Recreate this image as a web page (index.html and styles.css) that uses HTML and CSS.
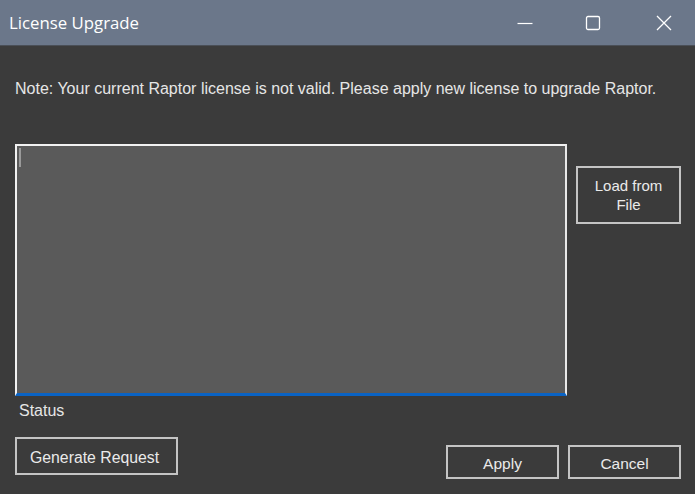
FILE: index.html
```html
<!DOCTYPE html>
<html>
<head>
<meta charset="utf-8">
<link rel="stylesheet" href="styles.css">
</head>
<body>
<div class="window">
  <header class="titlebar">
    <span class="title">License Upgrade</span>
    <div class="controls">
      <svg class="ctl ctl-min" width="16" height="16" viewBox="0 0 16 16"><path d="M0.5 8.5H15.5" stroke="#fff" stroke-width="1.2" fill="none"/></svg>
      <svg class="ctl ctl-max" width="16" height="16" viewBox="0 0 16 16"><rect x="1.5" y="1.5" width="13" height="13" rx="1.5" stroke="#fff" stroke-width="1.3" fill="none"/></svg>
      <svg class="ctl ctl-close" width="16" height="16" viewBox="0 0 16 16"><path d="M1 1L15 15M15 1L1 15" stroke="#fff" stroke-width="1.3" fill="none"/></svg>
    </div>
  </header>
  <main class="content">
    <p class="note">Note: Your current Raptor license is not valid. Please apply new license to upgrade Raptor.</p>
    <div class="editor-row">
      <div class="textbox"><span class="caret"></span></div>
      <div class="side">
        <button class="btn btn-load">Load from<br>File</button>
      </div>
    </div>
    <div class="status">Status</div>
    <div class="actions">
      <button class="btn btn-generate">Generate Request</button>
      <div class="right-actions">
        <button class="btn btn-dialog">Apply</button>
        <button class="btn btn-dialog">Cancel</button>
      </div>
    </div>
  </main>
</div>
</body>
</html>
```

FILE: styles.css
```css
html, body {
  margin: 0;
  padding: 0;
  background: #3b3b3b;
}
.window {
  width: 695px;
  height: 494px;
  overflow: hidden;
  background: #3b3b3b;
  font-family: "Liberation Sans", Arial, sans-serif;
  color: #e6e6e6;
}
.titlebar {
  height: 46px;
  background: #6b778a;
  border-bottom: 1px solid #4a4f57;
  box-sizing: border-box;
  display: flex;
  align-items: center;
}
.title {
  font-family: "Open Sans", "Noto Sans", sans-serif;
  font-size: 16.8px;
  color: #ffffff;
  padding-left: 9px;
  padding-bottom: 1px;
}
.controls {
  margin-left: auto;
  display: flex;
  align-items: center;
  padding-right: 23px;
}
.ctl { display: block; }
.ctl-max { margin-left: 52px; }
.ctl-close { margin-left: 55px; }

.content {
  padding: 0 14px 0 15px;
}
.note {
  margin: 0;
  padding-top: 34px;
  font-size: 16px;
  line-height: 18px;
  height: 18px;
  white-space: nowrap;
}
.editor-row {
  display: flex;
  margin-top: 46px;
}
.textbox {
  width: 552px;
  height: 252px;
  box-sizing: border-box;
  background: #5a5a5a;
  border-top: 2px solid #f2f2f2;
  border-left: 2px solid #f2f2f2;
  border-right: 2px solid #e8e8e8;
  border-bottom: 3px solid #0a63c4;
  padding: 2px 0 0 2px;
}
.caret {
  display: block;
  width: 2px;
  height: 19px;
  background: #9a9a9a;
}
.side {
  padding-left: 9px;
  padding-top: 22px;
}
.btn {
  font-family: "Liberation Sans", Arial, sans-serif;
  color: #eaeaea;
  background: #3b3b3b;
  border: 2px solid #c4c4c4;
  box-sizing: border-box;
  margin: 0;
  padding: 0;
  cursor: default;
}
.btn-load {
  width: 105px;
  height: 58px;
  font-size: 15px;
  line-height: 19px;
}
.status {
  font-size: 16px;
  line-height: 18px;
  padding-left: 4px;
  margin-top: 6px;
}
.actions {
  display: flex;
  align-items: flex-start;
  margin-top: 17px;
}
.btn-generate {
  width: 163px;
  height: 38px;
  font-size: 15.8px;
  text-align: left;
  padding: 3px 0 0 13px;
}
.right-actions {
  margin-left: auto;
  display: flex;
  gap: 9px;
  margin-top: 8px;
}
.btn-dialog {
  width: 113px;
  height: 34px;
  font-size: 15.5px;
  padding-top: 3px;
}
```
